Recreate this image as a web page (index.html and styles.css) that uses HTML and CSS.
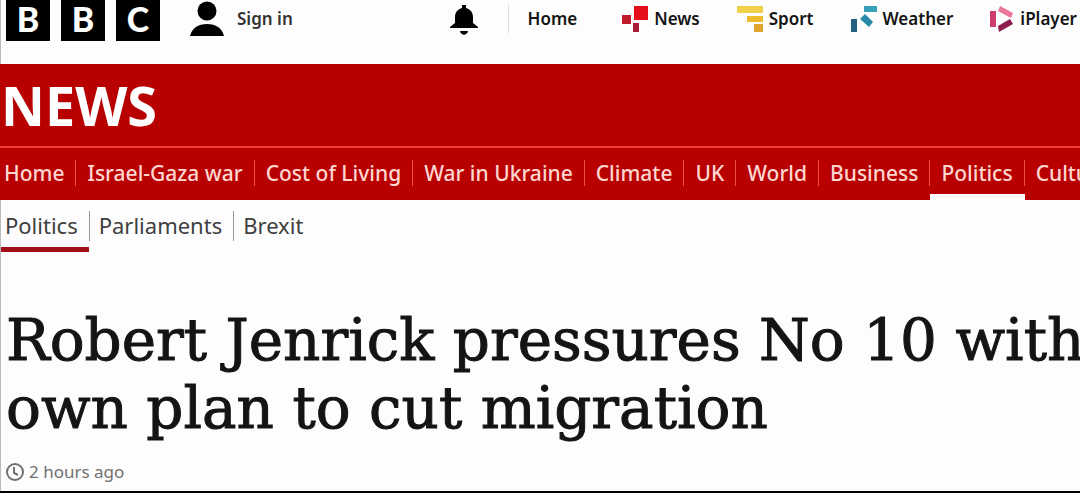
FILE: index.html
```
<!doctype html>
<html lang="en">
  <head>
    <meta charset="utf-8">
    <meta name="viewport" content="width=device-width, initial-scale=1">
    <title>Robert Jenrick pressures No 10 with own plan to cut migration - BBC News</title>
    <link rel="stylesheet" href="styles.css">
  </head>
  <body>
    <header class="masthead">
      <a class="logo" href="#" aria-label="BBC"><span>B</span><span>B</span><span>C</span></a>
      <a class="signin" href="#">
        <svg width="34" height="36" viewBox="0 0 34 36" aria-hidden="true">
          <circle cx="17" cy="10" r="9.5"/>
          <path d="M0 35C2 27 8 23 17 23s15 4 17 12z"/>
        </svg>
        Sign in
      </a>
      <button class="bell" type="button" aria-label="Notifications">
        <svg width="28" height="30" viewBox="0 0 28 30" aria-hidden="true">
          <path d="M12 0h4v3c4 1 7 4 7 9v6l5 4v1H0v-1l5-4v-6c0-5 3-8 7-9z"/>
          <path d="M10 26h8c-1 5-7 5-8 0z"/>
        </svg>
      </button>
      <nav class="services">
        <a class="services-home" href="#">Home</a>
        <a href="#">
          <svg width="26" height="26" viewBox="0 0 26 26" aria-hidden="true">
            <path fill="#e5101c" d="M12 0h14v14H12z"/>
            <path fill="#c01c2c" d="M0 9h9v9H0z"/>
            <path fill="#a81c38" d="M11 17h6v9h-6z"/>
          </svg>
          News
        </a>
        <a href="#">
          <svg width="26" height="26" viewBox="0 0 26 26" aria-hidden="true">
            <path fill="#f0d048" d="M0 0h26v7H0z"/>
            <path fill="#eebc28" d="M10 10h16v6H10z"/>
            <path fill="#dfa52c" d="M17 18h9v8h-9z"/>
          </svg>
          Sport
        </a>
        <a href="#">
          <svg width="26" height="26" viewBox="0 0 26 26" aria-hidden="true">
            <path fill="#3aa0ba" d="M13 0h13v6H13z"/>
            <path fill="#2888a8" d="M14 8l8 8-4 5-9-8z"/>
            <path fill="#246080" d="M0 13h6v13H0z"/>
          </svg>
          Weather
        </a>
        <a href="#">
          <svg width="24" height="26" viewBox="0 0 24 26" aria-hidden="true">
            <path fill="#cc3c70" d="M0 5h6v16H0z"/>
            <path fill="#ea7898" d="M10 0l13 7-2 5-13-7z"/>
            <path fill="#8c1c50" d="M8 20l12-7 3 5-14 8z"/>
          </svg>
          iPlayer
        </a>
      </nav>
    </header>

    <div class="section">
      <a class="section-title" href="#">NEWS</a>
      <nav class="section-nav">
        <a href="#">Home</a>
        <a href="#">Israel-Gaza war</a>
        <a href="#">Cost of Living</a>
        <a href="#">War in Ukraine</a>
        <a href="#">Climate</a>
        <a href="#">UK</a>
        <a href="#">World</a>
        <a href="#">Business</a>
        <a class="current" href="#">Politics</a>
        <a href="#">Culture</a>
      </nav>
    </div>

    <nav class="sub-nav">
      <a class="current" href="#">Politics</a>
      <a href="#">Parliaments</a>
      <a href="#">Brexit</a>
    </nav>

    <main class="article">
      <h1>Robert Jenrick pressures No 10 with own plan to cut migration</h1>
      <p class="date">
        <svg width="18" height="18" viewBox="0 0 18 18" aria-hidden="true">
          <circle cx="9" cy="9" r="8"/>
          <path d="M8 4v6l4 2"/>
        </svg>
        <time>2 hours ago</time>
      </p>
    </main>
  </body>
</html>
```
FILE: styles.css
```
* {
  box-sizing: border-box;
}
body {
  margin: 0;
  background-color: #fdfdfd;
  color: #141414;
  border-bottom: 2px solid #000;
  font-family: "Noto Sans", "Open Sans", sans-serif;
  overflow-x: hidden;
}
a {
  color: inherit;
  text-decoration: none;
  white-space: nowrap;
}

.masthead {
  display: flex;
  align-items: flex-start;
  height: 64px;
  padding: 0 3px 0 5px;
  border-left: 1px solid #bbb;
  font-size: 17px;
  font-weight: 600;
  line-height: 38px;
}
.logo {
  display: flex;
  gap: 11px;
}
.logo span {
  width: 44px;
  height: 41px;
  background-color: #000;
  color: #fff;
  font-family: Lato, "Noto Sans", sans-serif;
  font-size: 34px;
  font-weight: 900;
  line-height: 38px;
  text-align: center;
}
.signin {
  display: flex;
  align-items: center;
  gap: 13px;
  margin-left: 30px;
  color: #333;
}
.bell {
  margin: 5px 0 0 auto;
  padding: 0;
  border: 0;
  background: none;
  line-height: 0;
}
.services {
  display: flex;
  margin-left: 30px;
  gap: 37px;
}
.services a {
  display: flex;
  align-items: center;
  gap: 6px;
}
.services .services-home {
  height: 28px;
  margin: 5px 8px 0 0;
  padding-left: 19px;
  border-left: 1px solid #ddd;
}

.section {
  background-color: #b80000;
  color: #fff;
}
.section-title {
  display: block;
  padding-left: 1px;
  font-size: 54px;
  font-weight: 700;
  line-height: 82px;
}
.section-nav {
  display: flex;
  border-top: 2px solid #f03c34;
  color: #ffd6d0;
  font-size: 21px;
  font-weight: 500;
  line-height: 26px;
  overflow: hidden;
}
.section-nav a {
  padding: 12px 0 8px 11px;
  border-bottom: 6px solid transparent;
}
.section-nav a::after {
  content: "";
  display: inline-block;
  height: 26px;
  margin-left: 11px;
  border-left: 1px solid #f0504a;
  vertical-align: top;
}
.section-nav a:first-child,
.sub-nav a:first-child {
  padding-left: 4px;
}
.section-nav .current {
  border-bottom-color: #fdfdfd;
}

.sub-nav {
  display: flex;
  border-left: 1px solid #bbb;
  color: #404040;
  font-size: 22px;
  line-height: 28px;
}
.sub-nav a {
  padding: 11px 11px 8px 10px;
  border-bottom: 5px solid transparent;
}
.sub-nav .current {
  border-bottom-color: #a01018;
}
.sub-nav a + a {
  background: linear-gradient(#999, #999) 0 11px / 1px 30px no-repeat;
}

.article {
  padding: 54px 0 7px 5px;
  border-left: 1px solid #bbb;
}
/* the first line is allowed to run right up to the window edge */
h1 {
  margin: 0 -12px 0 0;
  font-family: "DejaVu Serif", serif;
  font-size: 58px;
  font-weight: 400;
  line-height: 68px;
  -webkit-text-stroke: 1px #141414;
}
.date {
  display: flex;
  align-items: center;
  gap: 5px;
  margin: 18px 0 0;
  color: #707070;
  font-size: 17px;
  line-height: 24px;
}
.date svg {
  fill: none;
  stroke: #707070;
  stroke-width: 2;
}
```
